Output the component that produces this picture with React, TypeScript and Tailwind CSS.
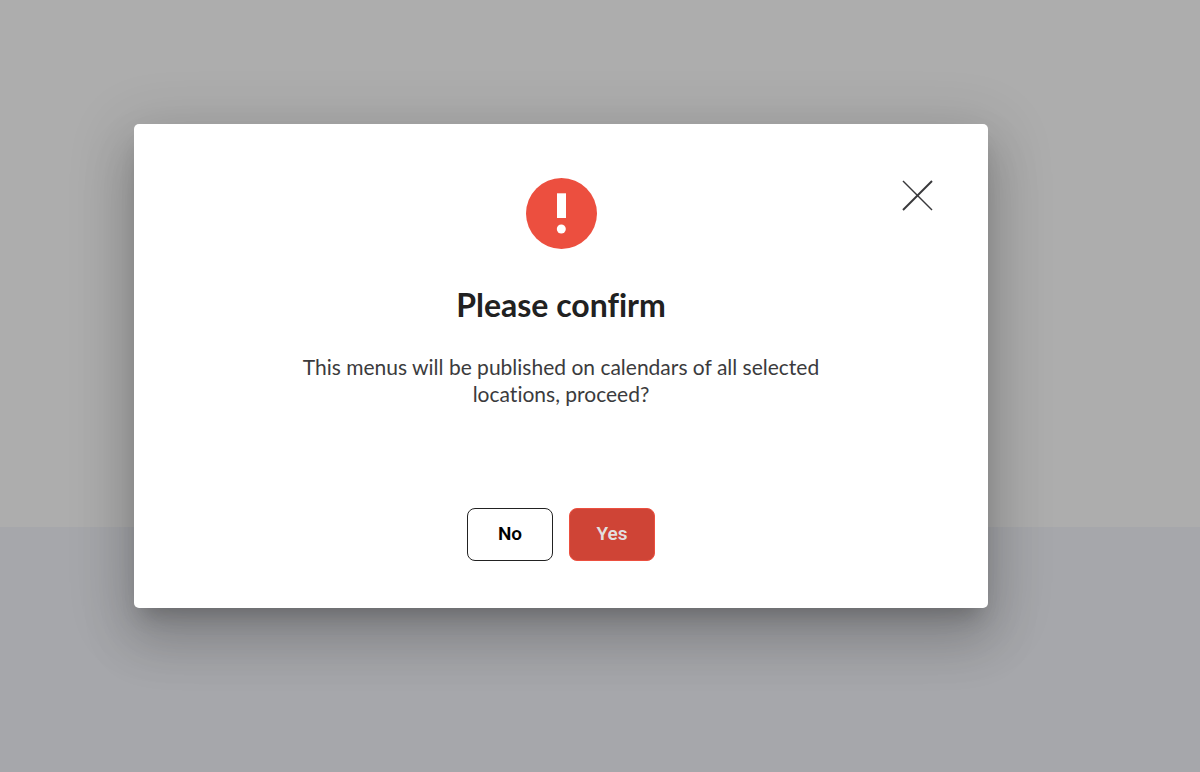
export default function App() {
  return (
    <div className="flex min-h-screen flex-col bg-[#adadad] font-[Lato,sans-serif]">
      <div className="grid min-h-screen grid-rows-[527fr_245fr]">
        <div className="col-start-1 row-start-1" />
        <div className="col-start-1 row-start-2 bg-[#a6a7ab]" />
        <div className="col-start-1 row-span-2 row-start-1 flex items-start justify-center pt-31 pr-[78px]">
          <section
            role="dialog"
            aria-modal="true"
            aria-labelledby="confirm-title"
            aria-describedby="confirm-text"
            className="relative flex w-full max-w-[854px] flex-col items-center rounded-[5px] bg-white px-14 pt-[54px] pb-[47px] shadow-[0_15px_20px_-9px_rgba(0,0,0,0.2),0_32px_51px_4px_rgba(0,0,0,0.14),0_12px_61px_11px_rgba(0,0,0,0.12)] [font-variant-ligatures:none]"
          >
            <button type="button" aria-label="Close" className="absolute top-14 right-[55px] cursor-pointer">
              <svg viewBox="0 0 31 31" className="size-[31px]" fill="none" stroke="#38383b">
                <path d="M1 1 30 30" strokeWidth="1.5" />
                <path d="M30 1 1 30" strokeWidth="1.9" />
              </svg>
            </button>
            <svg viewBox="0 0 71 71" className="size-[71px]" aria-hidden="true">
              <circle cx="35.5" cy="35.5" r="35.5" fill="#ec4f3f" />
              <path d="M31 15.3h9v24.7h-9z" fill="#fff" />
              <circle cx="35.3" cy="51" r="4.5" fill="#fff" />
            </svg>
            <h1 id="confirm-title" className="mt-9 text-[32px] leading-10 font-bold text-[#212121]">
              Please confirm
            </h1>
            <p id="confirm-text" className="mt-7 max-w-[570px] text-center text-[21px] leading-[27px] text-[#3b3b3d]">
              This menus will be published on calendars of all selected locations, proceed?
            </p>
            <div className="mt-[101px] flex gap-4 font-[Roboto,sans-serif] text-[19px] font-semibold">
              <button type="button" className="h-[53px] w-[86px] cursor-pointer rounded-lg border border-[#222] bg-white text-black">
                No
              </button>
              <button type="button" className="h-[53px] w-[86px] cursor-pointer rounded-lg border border-[#ec4f3f] bg-[#cf4436] text-[#e2dfdf]">
                Yes
              </button>
            </div>
          </section>
        </div>
      </div>
    </div>
  );
}
